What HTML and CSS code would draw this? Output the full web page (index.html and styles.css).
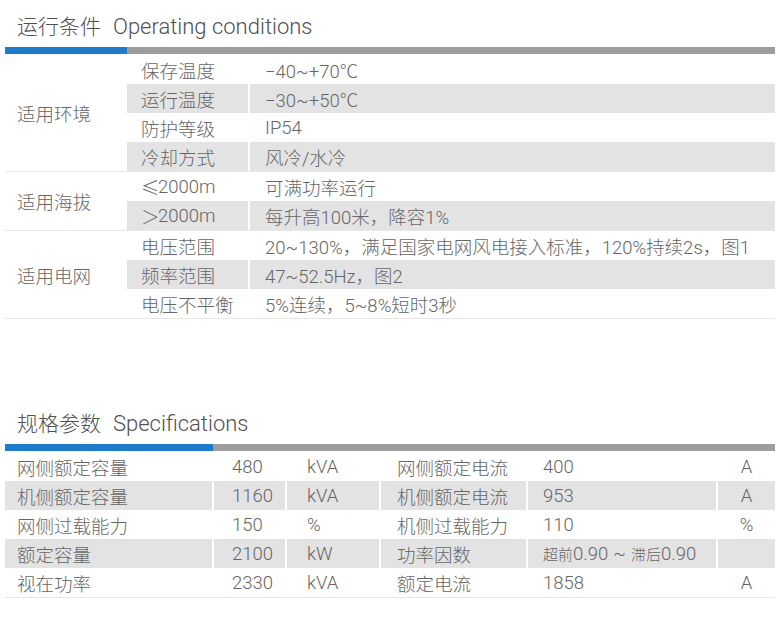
FILE: index.html
```html
<!DOCTYPE html>
<html lang="zh-CN">
<head>
<meta charset="utf-8">
<title>运行条件 / 规格参数</title>
<link rel="stylesheet" href="styles.css">
</head>
<body>
<div class="page">
  <section class="sec sec-cond">
    <h2 class="sec-title">运行条件<span class="en">Operating conditions</span></h2>
    <div class="bar"><div class="bar-blue"></div><div class="bar-gray"></div></div>
    <div class="cond">
      <div class="group">
        <div class="glabel">适用环境</div>
        <div class="grows">
          <div class="crow"><span>保存温度</span><span>−40~+70℃</span></div>
          <div class="crow alt"><span>运行温度</span><span>−30~+50℃</span></div>
          <div class="crow"><span>防护等级</span><span>IP54</span></div>
          <div class="crow alt"><span>冷却方式</span><span>风冷/水冷</span></div>
        </div>
      </div>
      <div class="group">
        <div class="glabel">适用海拔</div>
        <div class="grows">
          <div class="crow"><span><i class="sym">≤</i>2000m</span><span>可满功率运行</span></div>
          <div class="crow alt"><span><i class="sym">＞</i>2000m</span><span>每升高100米，降容1%</span></div>
        </div>
      </div>
      <div class="group">
        <div class="glabel">适用电网</div>
        <div class="grows">
          <div class="crow"><span>电压范围</span><span>20~130%，满足国家电网风电接入标准，120%持续2s，图1</span></div>
          <div class="crow alt"><span>频率范围</span><span>47~52.5Hz，图2</span></div>
          <div class="crow"><span>电压不平衡</span><span>5%连续，5~8%短时3秒</span></div>
        </div>
      </div>
    </div>
  </section>

  <section class="sec sec-spec">
    <h2 class="sec-title">规格参数<span class="en">Specifications</span></h2>
    <div class="bar bar-wide"><div class="bar-blue"></div><div class="bar-gray"></div></div>
    <div class="spec">
      <div class="srow"><span>网侧额定容量</span><span>480</span><span>kVA</span><span>网侧额定电流</span><span>400</span><span class="u">A</span></div>
      <div class="srow alt"><span>机侧额定容量</span><span>1160</span><span>kVA</span><span>机侧额定电流</span><span>953</span><span class="u">A</span></div>
      <div class="srow"><span>网侧过载能力</span><span>150</span><span>%</span><span>机侧过载能力</span><span>110</span><span class="u">%</span></div>
      <div class="srow alt"><span>额定容量</span><span>2100</span><span>kW</span><span>功率因数</span><span><i class="cn">超前</i>0.90<i class="tilde">~</i><i class="cn">滞后</i>0.90</span><span class="u"></span></div>
      <div class="srow"><span>视在功率</span><span>2330</span><span>kVA</span><span>额定电流</span><span>1858</span><span class="u">A</span></div>
    </div>
  </section>
</div>
</body>
</html>
```

FILE: styles.css
```css
html, body {
  margin: 0;
  padding: 0;
  background: #ffffff;
}
body {
  font-family: "Roboto", "Noto Sans CJK SC", sans-serif;
  font-weight: 300;
  color: #666666;
}
i {
  font-style: normal;
}
.page {
  padding: 0 2px 0 5px;
  width: 770px;
}
.sec-title {
  margin: 0;
  padding: 12px 0 0 12px;
  height: 30px;
  line-height: 30px;
  font-size: 21px;
  font-weight: 300;
  color: #505050;
  white-space: nowrap;
}
.sec-title .en {
  margin-left: 12px;
  font-size: 22px;
}
.sec-spec {
  margin-top: 90px;
}
.sec-spec .sec-title {
  padding-top: 0;
}
.bar {
  display: flex;
  height: 7px;
  margin-top: 5px;
}
.bar-blue {
  width: 122px;
  background: #1d7bca;
}
.bar-wide .bar-blue {
  width: 208px;
}
.bar-gray {
  flex: 1;
  background: #9d9d9d;
}

/* conditions table */
.cond {
  margin-top: 1px;
  font-size: 18.5px;
}
.group {
  display: flex;
  border-bottom: 1px solid #e6e6e6;
}
.glabel {
  width: 110px;
  padding-left: 12px;
  display: flex;
  align-items: center;
}
.grows {
  flex: 1;
}
.crow {
  display: grid;
  grid-template-columns: 121px 1fr;
  column-gap: 2px;
  height: 29px;
}
.crow > span {
  display: flex;
  align-items: center;
  white-space: nowrap;
}
.crow > span:first-child {
  padding-left: 14px;
}
.crow > span:last-child {
  padding-left: 15px;
}
.crow.alt > span {
  background: #e3e3e3;
}
.sym {
  font-family: "Noto Sans CJK SC", sans-serif;
  width: 17px;
}

/* spec table */
.spec {
  margin-top: 1px;
  font-size: 18.5px;
  border-bottom: 1px solid #e6e6e6;
}
.srow {
  display: grid;
  grid-template-columns: 207px 71px 92px 145px 188px 1fr;
  column-gap: 2px;
  height: 29px;
}
.srow > span {
  display: flex;
  align-items: center;
  white-space: nowrap;
}
.srow > span:nth-child(1) { padding-left: 12px; }
.srow > span:nth-child(2) { padding-left: 18px; }
.srow > span:nth-child(3) { padding-left: 20px; }
.srow > span:nth-child(4) { padding-left: 16px; }
.srow > span:nth-child(5) { padding-left: 15px; }
.srow > span.u { justify-content: center; }
.srow .cn {
  font-size: 15px;
}
.srow .tilde {
  margin: 0 5px;
}
.srow.alt > span {
  background: #e3e3e3;
}
```
